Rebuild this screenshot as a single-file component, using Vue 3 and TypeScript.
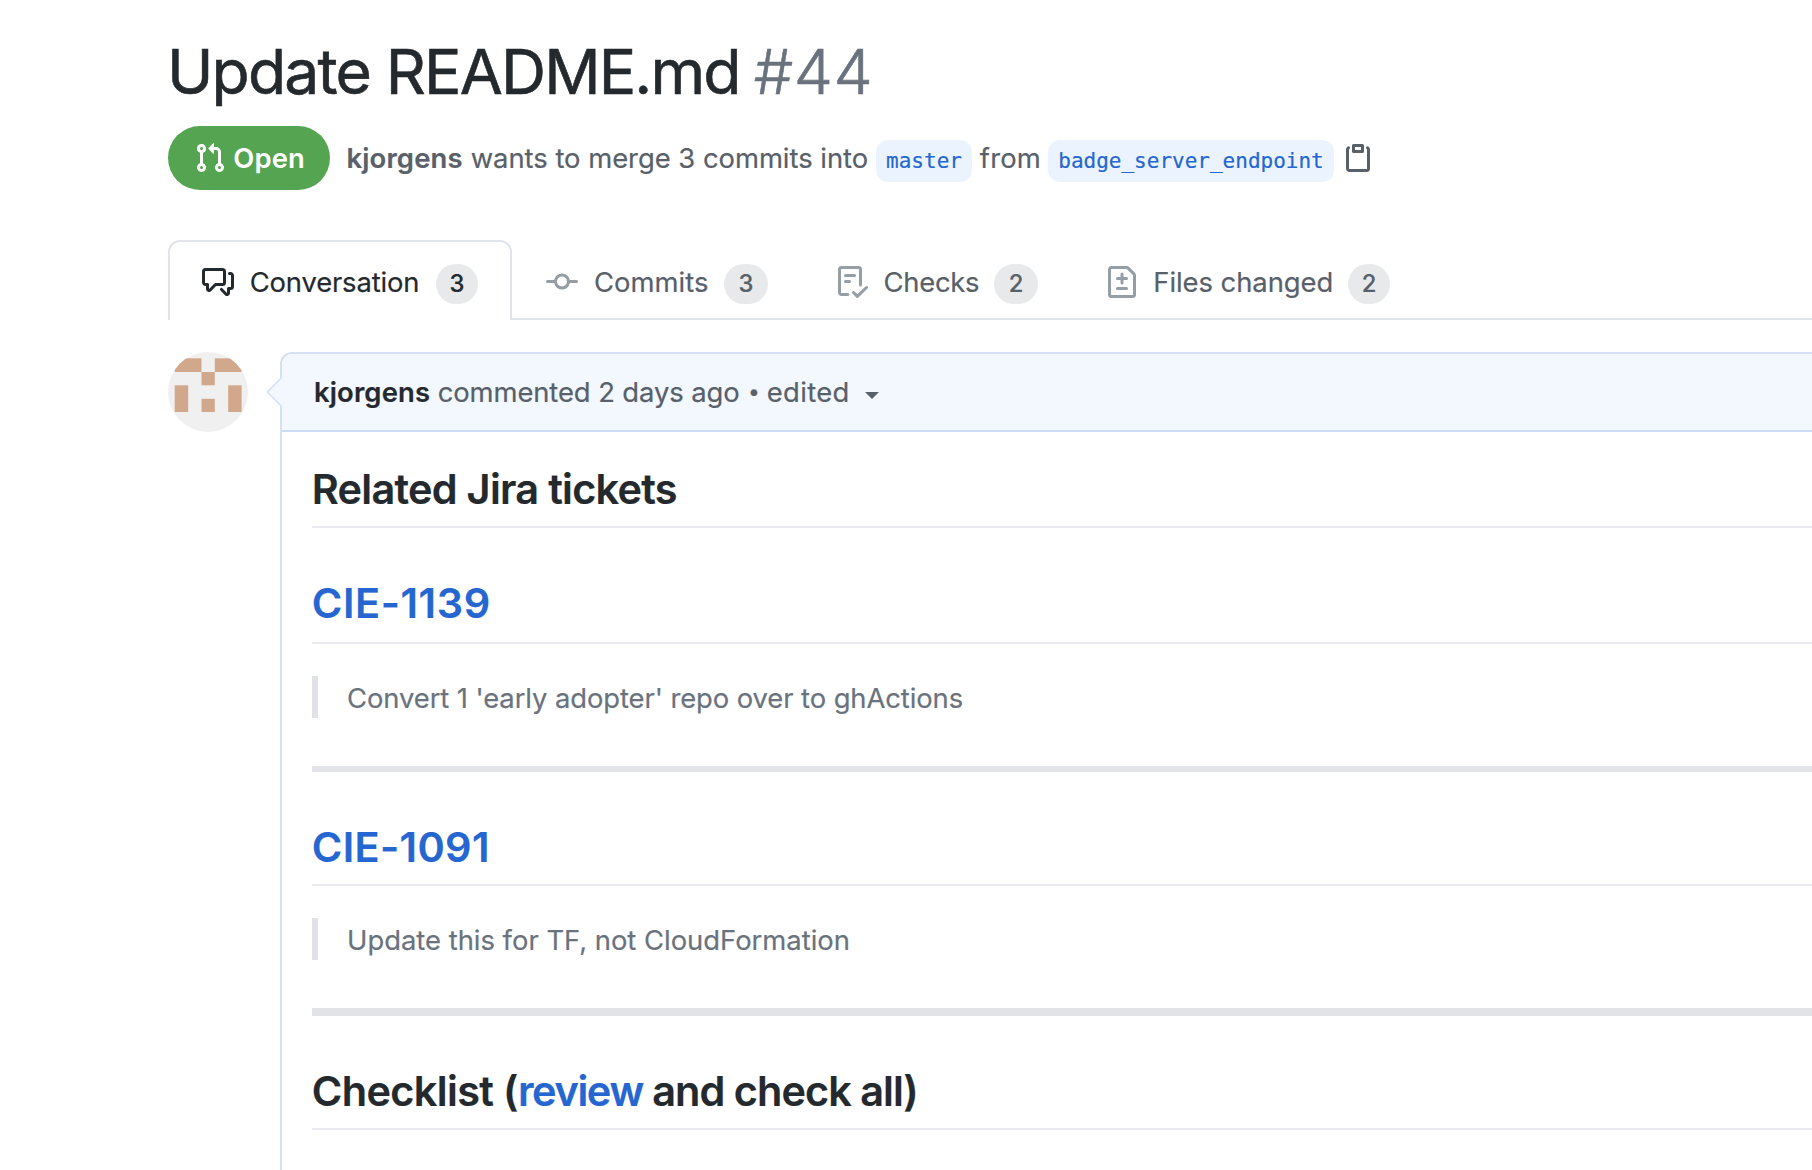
<script setup lang="ts">
interface Tab {
  id: string
  label: string
  count: number
  icon: string
  active?: boolean
}

const tabs: Tab[] = [
  {
    id: 'conversation',
    label: 'Conversation',
    count: 3,
    active: true,
    icon: 'M1.5 2.75a.25.25 0 01.25-.25h8.5a.25.25 0 01.25.25v5.5a.25.25 0 01-.25.25h-3.5a.75.75 0 00-.53.22L3.5 11.44V9.25a.75.75 0 00-.75-.75h-1a.25.25 0 01-.25-.25v-5.5zM1.75 1A1.75 1.75 0 000 2.75v5.5C0 9.216.784 10 1.75 10H2v1.543a1.457 1.457 0 002.487 1.03L7.061 10h3.189A1.75 1.75 0 0012 8.25v-5.5A1.75 1.75 0 0010.25 1h-8.5zM14.5 4.75a.25.25 0 00-.25-.25h-.5a.75.75 0 110-1.5h.5c.966 0 1.75.784 1.75 1.75v5.5A1.75 1.75 0 0114.25 12H14v1.543a1.457 1.457 0 01-2.487 1.03L9.22 12.28a.75.75 0 111.06-1.06l2.22 2.22v-2.19a.75.75 0 01.75-.75h1a.25.25 0 00.25-.25v-5.5z',
  },
  {
    id: 'commits',
    label: 'Commits',
    count: 3,
    icon: 'M10.5 7.75a2.5 2.5 0 11-5 0 2.5 2.5 0 015 0zm1.43.75a4.002 4.002 0 01-7.86 0H.75a.75.75 0 110-1.5h3.32a4.001 4.001 0 017.86 0h3.32a.75.75 0 110 1.5h-3.32z',
  },
  {
    id: 'checks',
    label: 'Checks',
    count: 2,
    icon: 'M2.5 1.75a.25.25 0 01.25-.25h8.5a.25.25 0 01.25.25v7.736a.75.75 0 101.5 0V1.75A1.75 1.75 0 0011.25 0h-8.5A1.75 1.75 0 001 1.75v11.5c0 .966.784 1.75 1.75 1.75h3.17a.75.75 0 000-1.5H2.75a.25.25 0 01-.25-.25V1.75zM4.75 4a.75.75 0 000 1.5h4.5a.75.75 0 000-1.5h-4.5zM4 7.75A.75.75 0 014.75 7h2a.75.75 0 010 1.5h-2A.75.75 0 014 7.75zm11.774 3.537a.75.75 0 00-1.048-1.074L10.7 14.145 9.281 12.72a.75.75 0 00-1.062 1.058l1.943 1.95a.75.75 0 001.055.008l4.557-4.45z',
  },
  {
    id: 'files',
    label: 'Files changed',
    count: 2,
    icon: 'M2.75 1.5a.25.25 0 00-.25.25v12.5c0 .138.112.25.25.25h10.5a.25.25 0 00.25-.25V4.664a.25.25 0 00-.073-.177l-2.914-2.914a.25.25 0 00-.177-.073H2.75zM1 1.75C1 .784 1.784 0 2.75 0h7.586c.464 0 .909.184 1.237.513l2.914 2.914c.329.328.513.773.513 1.237v9.586A1.75 1.75 0 0113.25 16H2.75A1.75 1.75 0 011 14.25V1.75zm7 1.5a.75.75 0 01.75.75v1.5h1.5a.75.75 0 010 1.5h-1.5v1.5a.75.75 0 01-1.5 0V7h-1.5a.75.75 0 010-1.5h1.5V4A.75.75 0 018 3.25zm-3 8a.75.75 0 01.75-.75h4.5a.75.75 0 010 1.5h-4.5a.75.75 0 01-.75-.75z',
  },
]

// Filled areas of the identicon: x, y, width, height.
const blocks: [number, number, number, number][] = [
  [6.7, 6.3, 26.8, 13.7],
  [46.8, 6.3, 26.8, 13.7],
  [33.5, 20, 13.3, 13.3],
  [6.7, 33.3, 13.5, 26.7],
  [60.2, 33.3, 13.4, 26.7],
  [33.5, 46.8, 13.3, 13.2],
]
</script>

<template>
  <main class="page">
    <h1 class="title">
      <span class="title-text">Update README.md</span>
      <span class="title-number">#44</span>
    </h1>

    <div class="meta">
      <span class="state">
        <svg class="icon" viewBox="0 0 16 16" aria-hidden="true">
          <path fill-rule="evenodd" d="M7.177 3.073L9.573.677A.25.25 0 0110 .854v4.792a.25.25 0 01-.427.177L7.177 3.427a.25.25 0 010-.354zM3.75 2.5a.75.75 0 100 1.5.75.75 0 000-1.5zm-2.25.75a2.25 2.25 0 113 2.122v5.256a2.251 2.251 0 11-1.5 0V5.372A2.25 2.25 0 011.5 3.25zM11 2.5h-1V4h1a1 1 0 011 1v5.628a2.251 2.251 0 101.5 0V5A2.5 2.5 0 0011 2.5zm1 10.25a.75.75 0 111.5 0 .75.75 0 01-1.5 0zM3.75 12a.75.75 0 100 1.5.75.75 0 000-1.5z" />
        </svg>
        <span class="state-text">Open</span>
      </span>
      <a class="meta-author">kjorgens</a>
      <span class="meta-text">wants to merge 3 commits into</span>
      <a class="branch branch-base">master</a>
      <span class="meta-from">from</span>
      <a class="branch branch-head">badge_server_endpoint</a>
      <svg class="icon copy" viewBox="0 0 16 16" aria-hidden="true">
        <path fill-rule="evenodd" d="M5.75 1a.75.75 0 00-.75.75v3c0 .414.336.75.75.75h4.5a.75.75 0 00.75-.75v-3a.75.75 0 00-.75-.75h-4.5zm.75 3V2.5h3V4h-3zm-2.874-.467a.75.75 0 00-.752-1.298A1.75 1.75 0 002 3.75v9.5c0 .966.784 1.75 1.75 1.75h8.5A1.75 1.75 0 0014 13.25v-9.5a1.75 1.75 0 00-.874-1.515.75.75 0 10-.752 1.298.25.25 0 01.126.217v9.5a.25.25 0 01-.25.25h-8.5a.25.25 0 01-.25-.25v-9.5a.25.25 0 01.126-.217z" />
      </svg>
    </div>

    <nav class="tabs">
      <a v-for="tab in tabs" :key="tab.id" class="tab" :class="['tab-' + tab.id, { active: tab.active }]">
        <svg class="icon" viewBox="0 0 16 16" aria-hidden="true">
          <path fill-rule="evenodd" :d="tab.icon" />
        </svg>
        <span class="tab-label">{{ tab.label }}</span>
        <span class="counter">{{ tab.count }}</span>
      </a>
    </nav>

    <div class="timeline">
      <svg class="avatar" viewBox="0 0 80 80" aria-hidden="true">
        <rect width="80" height="80" fill="#f0f0f0" />
        <rect
          v-for="[x, y, w, h] in blocks"
          :key="`${x}-${y}`"
          :x="x"
          :y="y"
          :width="w"
          :height="h"
          fill="#d1a88b"
        />
      </svg>

      <article class="comment">
        <svg class="pointer" viewBox="0 0 16 30" aria-hidden="true">
          <path d="M16 0.5 L1.2 15 L16 29.5 Z" fill="#f3f7fe" />
          <path d="M15 1.2 L1.2 15 L15 28.8" fill="none" stroke="#d5e0f5" stroke-width="1.6" />
        </svg>
        <header class="comment-header">
          <a class="author">kjorgens</a>
          <span class="when">commented 2 days ago</span>
          <span class="dot">•</span>
          <span class="edited">edited</span>
          <span class="caret"></span>
        </header>
        <div class="body">
          <h2 class="related"><span>Related Jira tickets</span></h2>
          <h2 class="ticket ticket-first"><a>CIE-1139</a></h2>
          <blockquote class="quote-first">Convert 1 'early adopter' repo over to ghActions</blockquote>
          <hr />
          <h2 class="ticket ticket-second"><a>CIE-1091</a></h2>
          <blockquote class="quote-second">Update this for TF, not CloudFormation</blockquote>
          <hr class="thick" />
          <h2 class="checklist"><span>Checklist (</span><a>review</a><span class="tail"> and check all)</span></h2>
        </div>
      </article>
    </div>
  </main>
</template>

<style>
body {
  background: #fff;
  overflow: hidden;
}
</style>

<style scoped>
.page {
  box-sizing: border-box;
  height: 1170px;
  padding: 32px 0 0 168px;
  overflow: hidden;
  color: #24292e;
  font-family: Inter, "Liberation Sans", sans-serif;
  font-size: 27.4px;
  font-weight: 400;
  line-height: 40px;
  white-space: nowrap;
  -webkit-text-stroke: 0.2px currentColor;
}

.icon {
  display: block;
  flex: none;
  width: 32px;
  height: 32px;
  fill: currentColor;
}

.title {
  display: flex;
  gap: 14px;
  margin: 0 0 0 -1px;
  font-size: 62.4px;
  font-weight: 400;
  line-height: 79px;
  -webkit-text-stroke-width: 0.6px;
}

.title-text {
  letter-spacing: -1.833px;
}

.title-number {
  color: #6a737d;
  font-weight: 300;
  letter-spacing: 0.5px;
}

.meta {
  display: flex;
  align-items: center;
  height: 64px;
  margin-top: 15px;
  color: #586069;
}

.state {
  box-sizing: border-box;
  display: flex;
  align-items: center;
  gap: 7.3px;
  width: 162px;
  height: 64px;
  padding-left: 26px;
  border-radius: 32px;
  background: #54a451;
  color: #fff;
}

.state-text {
  font-weight: 600;
  letter-spacing: 0.1px;
  -webkit-text-stroke-width: 0;
}

.meta-author {
  margin-left: 16.5px;
  font-weight: 600;
  letter-spacing: 0.157px;
}

.meta-text {
  margin-left: 8.1px;
  letter-spacing: -0.022px;
}

.branch {
  box-sizing: border-box;
  height: 42px;
  margin-top: 6px;
  border-radius: 12px;
  background: #ebf4fe;
  color: #2566d0;
  font-family: "DejaVu Sans Mono", "Liberation Mono", monospace;
  font-size: 21px;
  line-height: 42px;
  text-align: center;
}

.branch-base {
  width: 96px;
  margin-left: 7.9px;
}

.meta-from {
  margin-left: 7.8px;
  letter-spacing: 0.194px;
}

.branch-head {
  width: 286px;
  margin-left: 7px;
}

.copy {
  margin-left: 8px;
}

.tabs {
  display: flex;
  box-sizing: border-box;
  height: 80px;
  margin-top: 50px;
  border-bottom: 2px solid #e0e4e9;
}

.tab {
  box-sizing: border-box;
  display: flex;
  align-items: center;
  height: 80px;
  padding: 2px 32px 0;
  border: solid transparent;
  border-width: 2px 2px 0;
  color: #586069;
}

.tab .icon {
  color: #959da5;
}

.tab.active {
  border-color: #e1e4eb;
  border-radius: 12px 12px 0 0;
  background: #fff;
  color: #24292e;
}

.tab.active .icon {
  color: #24292e;
}

.counter {
  box-sizing: border-box;
  width: 42px;
  height: 40px;
  margin-top: 4px;
  border-radius: 21px;
  background: #e8e9eb;
  font-size: 23.8px;
  font-weight: 500;
  line-height: 40px;
  text-align: center;
}

.tab-conversation .tab-label {
  margin: 0 16.8px 0 15.7px;
  letter-spacing: -0.155px;
}

.tab-commits .tab-label {
  margin: 0 15.5px 0 16px;
  letter-spacing: 0.042px;
}

.tab-checks .tab-label {
  margin: 0 14.8px 0 15.5px;
  letter-spacing: -0.271px;
}

.tab-files .tab-label {
  margin: 0 15px 0 15.3px;
  letter-spacing: -0.05px;
}

.tab-commits .counter,
.tab-checks .counter {
  width: 44px;
}

.timeline {
  display: flex;
  align-items: flex-start;
  gap: 32px;
  margin-top: 32px;
}

.avatar {
  flex: none;
  width: 80px;
  height: 80px;
  border-radius: 50%;
}

.comment {
  position: relative;
  flex: 1;
  box-sizing: border-box;
  height: 900px;
  border: solid #d5e0f5;
  border-width: 2px 0 0 2px;
  border-radius: 12px 0 0 0;
}

.pointer {
  position: absolute;
  top: 23px;
  left: -16px;
  width: 16px;
  height: 30px;
}

.comment-header {
  display: flex;
  align-items: center;
  height: 76px;
  padding-left: 32px;
  border-bottom: 2px solid #cadbf3;
  border-radius: 10px 0 0 0;
  background: #f3f7fe;
  color: #586069;
}

.author {
  color: #24292e;
  font-weight: 600;
  letter-spacing: 0.157px;
}

.when {
  margin-left: 7.6px;
  letter-spacing: -0.092px;
}

.dot {
  width: 14px;
  margin-left: 7.4px;
  font-size: 21px;
  text-align: center;
}

.edited {
  margin-left: 5.8px;
  letter-spacing: 0.35px;
}

.caret {
  margin: 7px 0 0 15px;
  border: 7px solid transparent;
  border-top: 7.5px solid #586069;
  border-bottom: 0;
}

.body {
  padding: 31px 0 0 30px;
}

h2 {
  margin: 49px 0 0;
  padding-bottom: 11px;
  border-bottom: 2px solid #eaebf0;
  font-size: 41.4px;
  font-weight: 600;
  line-height: 52px;
  text-indent: -0.2px;
}

h2 a {
  color: #2566d0;
}

.related {
  margin-top: 0;
  letter-spacing: -0.71px;
}

.ticket-first {
  padding-bottom: 13px;
  letter-spacing: 0.6px;
}

.ticket-second {
  letter-spacing: 0.36px;
}

.checklist {
  letter-spacing: -0.62px;
}

.checklist a {
  letter-spacing: -1.34px;
}

.checklist .tail {
  letter-spacing: -0.94px;
}

blockquote {
  height: 42px;
  margin: 32px 0 48px;
  padding-left: 29px;
  border-left: 6px solid #dfe2e6;
  color: #6a737d;
  line-height: 44px;
}

.quote-first {
  letter-spacing: -0.082px;
}

.quote-second {
  letter-spacing: 0;
}

hr {
  height: 6px;
  margin: 0;
  border: 0;
  background: #e1e3e7;
}

hr.thick {
  height: 8px;
}
</style>
